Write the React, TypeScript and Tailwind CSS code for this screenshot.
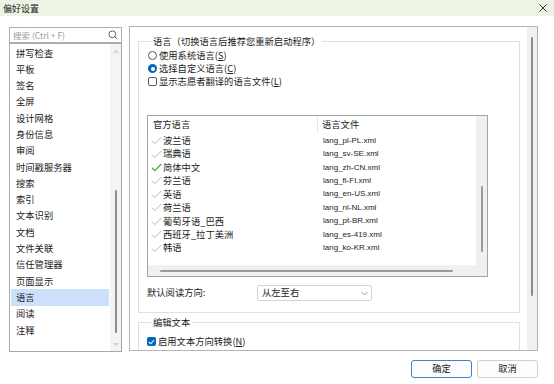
import React from "react";

const navItems = [
  "拼写检查","平板","签名","全屏","设计网格","身份信息","审阅","时间戳服务器","搜索","索引","文本识别","文档","文件关联","信任管理器","页面显示","语言","阅读","注释",
];

const langs: [string, string, boolean][] = [
  ["波兰语", "lang_pl-PL.xml", false],
  ["瑞典语", "lang_sv-SE.xml", false],
  ["简体中文", "lang_zh-CN.xml", true],
  ["芬兰语", "lang_fi-FI.xml", false],
  ["英语", "lang_en-US.xml", false],
  ["荷兰语", "lang_nl-NL.xml", false],
  ["葡萄牙语_巴西", "lang_pt-BR.xml", false],
  ["西班牙_拉丁美洲", "lang_es-419.xml", false],
  ["韩语", "lang_ko-KR.xml", false],
];

function Check({ green }: { green: boolean }) {
  return (
    <svg width="11" height="9" viewBox="0 0 11 9" className="shrink-0">
      <path
        d="M0.8 4.6 L3.8 7.6 L10.3 1"
        fill="none"
        stroke={green ? "#3dae3d" : "#b9b9b9"}
        strokeWidth={green ? 1.3 : 1}
      />
    </svg>
  );
}

export default function App() {
  const cjk = { fontFamily: '"Noto Sans CJK SC", "Noto Sans", sans-serif' };
  return (
    <div
      className="w-[554px] h-[384px] bg-white text-[#1b1b1b] overflow-hidden flex flex-col"
      style={cjk}
    >
      {/* Title bar */}
      <div className="h-[16px] bg-[#edf4e5] flex items-center justify-between pl-[3px] pr-[7px] shrink-0">
        <span className="text-[9px] leading-none">偏好设置</span>
        <svg width="8" height="8" viewBox="0 0 8 8">
          <path d="M0.5 0.5 L7.5 7.5 M7.5 0.5 L0.5 7.5" stroke="#333" strokeWidth="1" />
        </svg>
      </div>

      <div className="flex pt-[10px] pl-[9px] gap-[7px]">
        {/* Left column */}
        <div className="w-[113px] mt-[1px] flex flex-col">
          <div className="h-[16px] border border-[#b0b0b0] flex items-center justify-between pl-[3px] pr-[3px] bg-white">
            <span className="text-[8.5px] leading-none text-[#9a9a9a]">搜索 (Ctrl + F)</span>
            <svg width="10" height="10" viewBox="0 0 10 10">
              <circle cx="4.3" cy="4.3" r="3.4" fill="none" stroke="#555" strokeWidth="0.9" />
              <path d="M6.8 6.8 L9.2 9.2" stroke="#555" strokeWidth="0.9" />
            </svg>
          </div>
          <div className="h-[309px] border border-[#a8a8a8] flex bg-white">
            <div className="w-[100px] pt-[1px]">
              {navItems.map((n) => (
                <div
                  key={n}
                  className={`h-[16.3px] ml-[1px] w-[98px] pl-[5px] flex items-center text-[9.3px] leading-none ${
                    n === "语言" ? "bg-[#cce0fb]" : ""
                  }`}
                >
                  {n}
                </div>
              ))}
            </div>
            <div className="w-[11px] bg-[#f4f4f4] flex flex-col items-center pt-[5px] pb-[4px]">
              <svg width="6" height="4" viewBox="0 0 6 4">
                <path d="M0 4 L3 0.5 L6 4 Z" fill="#d2d2d2" />
              </svg>
              <div className="h-[137px]" />
              <div className="w-[2px] h-[143px] bg-[#8d8d8d] rounded-full" />
              <div className="flex-1" />
              <svg width="6" height="4" viewBox="0 0 6 4">
                <path d="M0 0 L3 3.5 L6 0 Z" fill="#d2d2d2" />
              </svg>
            </div>
          </div>
        </div>

        {/* Right panel */}
        <div className="w-[409px] h-[325px] border border-[#b4b4b4] flex">
          <div className="w-[397px] h-full overflow-hidden pl-[8px] pr-[7px] pt-[8px] bg-white">
            {/* Group 1 */}
            <fieldset className="border border-[#e0e0e0] pl-[8px] pr-[31px] pb-[11px]">
              <legend className="ml-[4px] px-[2px] text-[9.3px] leading-[12px]">
                语言（切换语言后推荐您重新启动程序）
              </legend>
              <div className="pt-[2px]">
                <div className="h-[13px] flex items-center gap-[2px] pl-[1px] text-[9.3px] leading-none">
                  <span className="w-[9px] h-[9px] rounded-full border border-[#5a5a5a] bg-white shrink-0" />
                  <span>
                    使用系统语言(<span className="underline">S</span>)
                  </span>
                </div>
                <div className="h-[13px] flex items-center gap-[2px] pl-[1px] text-[9.3px] leading-none">
                  <span className="w-[9px] h-[9px] rounded-full bg-[#0067c0] flex items-center justify-center shrink-0">
                    <span className="w-[4px] h-[4px] rounded-full bg-white" />
                  </span>
                  <span>
                    选择自定义语言(<span className="underline">C</span>)
                  </span>
                </div>
                <div className="h-[13px] flex items-center gap-[2px] pl-[1px] text-[9.3px] leading-none">
                  <span className="w-[9px] h-[9px] rounded-[2px] border border-[#5a5a5a] bg-white shrink-0" />
                  <span>
                    显示志愿者翻译的语言文件(<span className="underline">L</span>)
                  </span>
                </div>
              </div>

              {/* Table */}
              <div className="mt-[27px] h-[162px] border border-[#a4a4ac] flex flex-col bg-white">
                <div className="flex flex-1 min-h-0">
                  <div className="flex-1 flex flex-col">
                    <div className="h-[18px] flex items-center text-[9.3px] leading-none">
                      <div className="w-[169px] pl-[5px]">官方语言</div>
                      <div className="h-[16px] w-px bg-[#e4e4e4]" />
                      <div className="pl-[4px]">语言文件</div>
                    </div>
                    {langs.map(([name, file, green]) => (
                      <div key={file} className="h-[13.43px] flex items-center">
                        <div className="w-[170px] pl-[3px] flex items-center gap-[1px] text-[9.3px] leading-none">
                          <Check green={green} />
                          <span>{name}</span>
                        </div>
                        <div
                          className="pl-[5px] text-[8px] leading-none"
                          style={{ fontFamily: '"Liberation Sans", Arial, sans-serif' }}
                        >
                          {file}
                        </div>
                      </div>
                    ))}
                  </div>
                  <div className="w-[11px] bg-[#f0f0f0] flex justify-center pt-[70px]">
                    <div className="w-[2px] h-[66px] bg-[#9a9a9a] rounded-full" />
                  </div>
                </div>
                <div className="h-[11px] bg-[#f0f0f0] flex items-center pl-[12px]">
                  <div className="h-[2px] w-[293px] bg-[#9a9a9a] rounded-full" />
                </div>
              </div>

              {/* Reading direction */}
              <div className="mt-[8px] flex items-center h-[16px]">
                <span className="w-[110px] text-[9.3px] leading-none">默认阅读方向:</span>
                <div className="w-[115px] h-[16px] border border-[#d4d4d4] rounded-[2px] flex items-center justify-between pl-[4px] pr-[3px] bg-white">
                  <span className="text-[9.3px] leading-none">从左至右</span>
                  <svg width="7" height="5" viewBox="0 0 7 5">
                    <path d="M0.5 1 L3.5 4 L6.5 1" fill="none" stroke="#8a8a8a" strokeWidth="0.9" />
                  </svg>
                </div>
              </div>
            </fieldset>

            {/* Group 2 */}
            <fieldset className="mt-[3px] border border-[#e0e0e0] pl-[8px] pb-[20px]">
              <legend className="ml-[4px] px-[2px] text-[9.3px] leading-[12px]">编辑文本</legend>
              <div className="pt-[7px]">
                <div className="h-[13px] flex items-center gap-[2px] text-[9.3px] leading-none">
                  <span className="w-[9px] h-[9px] rounded-[2px] bg-[#0067c0] flex items-center justify-center shrink-0">
                    <svg width="7" height="6" viewBox="0 0 7 6">
                      <path d="M0.8 3 L2.7 4.8 L6.2 1" fill="none" stroke="white" strokeWidth="1.1" />
                    </svg>
                  </span>
                  <span>
                    启用文本方向转换(<span className="underline">N</span>)
                  </span>
                </div>
              </div>
            </fieldset>
          </div>
          <div className="w-[10px] h-full bg-[#f0f0f0] flex justify-center pt-[10px]">
            <div className="w-[2px] h-[259px] bg-[#8a8a8a] rounded-full" />
          </div>
        </div>
      </div>

      {/* Buttons */}
      <div className="flex justify-end gap-[5px] pr-[16px] mt-[8px]">
        <button className="w-[61px] h-[18px] border border-[#3c82d2] rounded-[3px] bg-[#fdfdfd] text-[9.3px] leading-none flex items-center justify-center">
          确定
        </button>
        <button className="w-[61px] h-[18px] border border-[#d0d0d0] rounded-[3px] bg-[#fdfdfd] text-[9.3px] leading-none flex items-center justify-center">
          取消
        </button>
      </div>
    </div>
  );
}
